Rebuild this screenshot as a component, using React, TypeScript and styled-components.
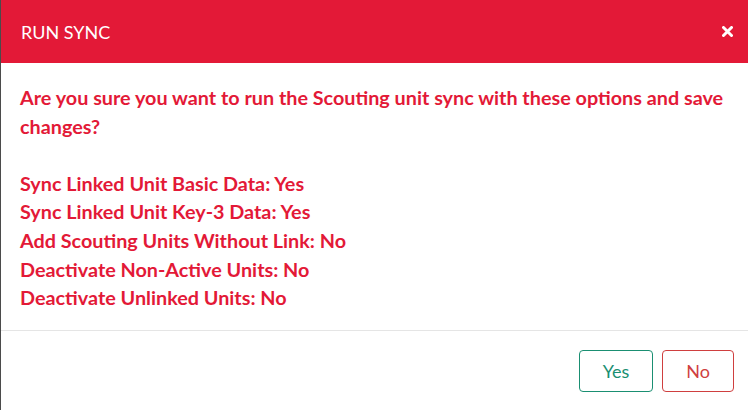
import React from "react";
import styled, { createGlobalStyle } from "styled-components";

const Global = createGlobalStyle`
  html, body { margin: 0; padding: 0; background: #4b4b4b; }
  body { font-family: Lato, "Open Sans", sans-serif; }
`;

const Backdrop = styled.div`
  display: flex;
  height: 410px;
  padding-left: 1px;
  overflow: hidden;
`;

const Modal = styled.div`
  flex: 1;
  display: flex;
  flex-direction: column;
  background: #fff;
`;

const Header = styled.div`
  height: 63px;
  background: #e31937;
  display: flex;
  align-items: center;
  justify-content: space-between;
  padding: 0 15px 0 20px;
  box-sizing: border-box;
`;

const Title = styled.h4`
  margin: 0;
  color: #fff;
  font-size: 18px;
  font-weight: 400;
`;

const Close = styled.button`
  border: 0;
  background: transparent;
  padding: 0;
  width: 12px;
  height: 12px;
  display: flex;
  align-items: center;
  justify-content: center;
  cursor: pointer;
`;

const Body = styled.div`
  padding: 20px 19px 18px 19px;
  border-bottom: 1px solid #e5e5e5;
`;

const Message = styled.p`
  margin: 0;
  color: #e31937;
  font-size: 19.8px;
  font-weight: 700;
  line-height: 28.6px;
`;

const Footer = styled.div`
  display: flex;
  justify-content: flex-end;
  gap: 9px;
  padding: 19px 14px 0 0;
`;

const Button = styled.button<{ $tone: string }>`
  height: 42px;
  padding: 0 23px;
  border: 1px solid ${(p) => p.$tone};
  color: ${(p) => p.$tone};
  background: #fff;
  border-radius: 4px;
  font-family: Lato, sans-serif;
  font-size: 18px;
  font-weight: 400;
  cursor: pointer;
`;

export default function App() {
  return (
    <>
      <Global />
      <Backdrop>
        <Modal>
          <Header>
            <Title>RUN SYNC</Title>
            <Close aria-label="Close">
              <svg width="11" height="11" viewBox="0 0 11 11">
                <path d="M1.5 1.5 L9.5 9.5 M9.5 1.5 L1.5 9.5" stroke="#fff" strokeWidth="3" strokeLinecap="round" />
              </svg>
            </Close>
          </Header>
          <Body>
            <Message>
              Are you sure you want to run the Scouting unit sync with these options and save changes?
              <br />
              <br />
              Sync Linked Unit Basic Data: Yes
              <br />
              Sync Linked Unit Key-3 Data: Yes
              <br />
              Add Scouting Units Without Link: No
              <br />
              Deactivate Non-Active Units: No
              <br />
              Deactivate Unlinked Units: No
            </Message>
          </Body>
          <Footer>
            <Button $tone="#1a8f72">Yes</Button>
            <Button $tone="#cf3f3f">No</Button>
          </Footer>
        </Modal>
      </Backdrop>
    </>
  );
}
